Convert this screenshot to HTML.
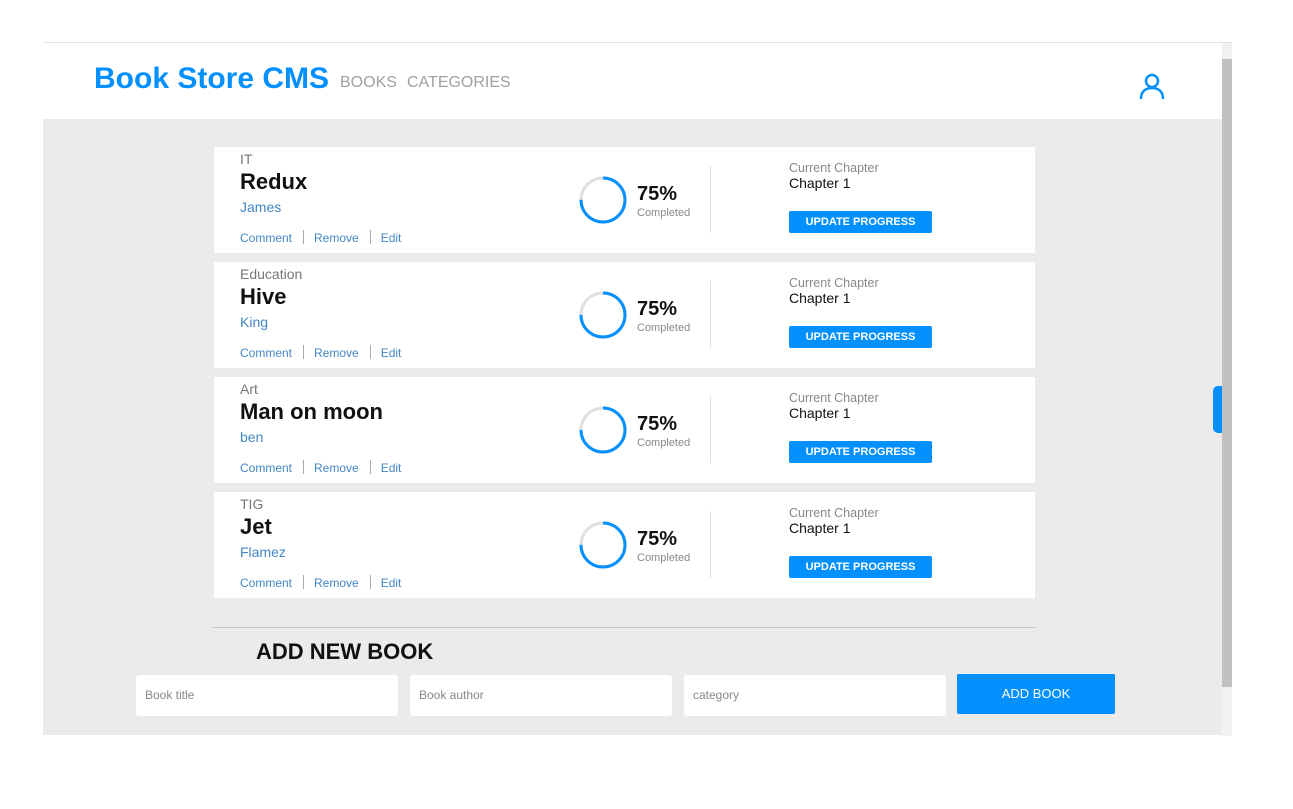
<!DOCTYPE html>
<html><head><style>
*{box-sizing:border-box;margin:0;padding:0}
body{width:1293px;height:809px;background:#fff;font-family:"Liberation Sans",Arial,sans-serif;position:relative;overflow:hidden}
.frame{position:absolute;left:43px;top:42px;width:1189px;height:693px;background:#edebe9;border-top:1px solid #e2e2e2}
.hdr{position:absolute;left:0;top:0;width:1179px;height:76px;background:#fff}
.logo{position:absolute;left:51px;top:19px;font-size:30px;font-weight:bold;color:#0290ff}
.nav{position:absolute;top:31px;font-size:16px;color:#a0a0a0}
.sb{position:absolute;left:1179px;top:0;width:10px;height:693px;background:#f1f1f1}
.thumb{position:absolute;left:1179px;top:16px;width:10px;height:628px;background:#c1c1c1}
.tab{position:absolute;left:1170px;top:343px;width:9px;height:47px;background:#0290ff;border-radius:5px 0 0 5px}
.card{position:absolute;left:171px;width:821px;height:106px;background:#fff}
.cat{position:absolute;left:26px;top:4px;font-size:14px;color:#777}
.title{position:absolute;left:26px;top:22px;font-size:22px;font-weight:bold;color:#111}
.auth{position:absolute;left:26px;top:52px;font-size:14px;color:#4386c6}
.acts{position:absolute;left:26px;top:83px;font-size:12px;color:#4386c6}
.acts span.s{display:inline-block;width:1px;height:14px;background:#aaa;margin:0 10px 0 11px;vertical-align:-2px}
.ring{position:absolute;left:364px;top:28px}
.pct{position:absolute;left:423px;top:36px;font-size:20px;font-weight:bold;color:#111}
.comp{position:absolute;left:423px;top:60px;font-size:11px;color:#888}
.div{position:absolute;left:496px;top:19px;width:1px;height:67px;background:#ddd}
.cc{position:absolute;left:575px;top:14px;font-size:12.5px;color:#888}
.ch{position:absolute;left:575px;top:28px;font-size:14px;color:#111}
.btn{position:absolute;left:575px;top:64px;width:143px;height:22px;background:#0290ff;color:#fff;font-size:11px;font-weight:bold;text-align:center;line-height:22px;border-radius:2px}
.line{position:absolute;left:170px;top:584px;width:822px;height:1px;background:#c8c8c8}
.add{position:absolute;left:213px;top:596px;font-size:22px;font-weight:bold;color:#111}
.inp{position:absolute;top:632px;width:262px;height:41px;background:#fff;border-radius:3px;font-size:12px;color:#888;padding:13px 9px}
.ab{position:absolute;left:914px;top:631px;width:158px;height:40px;background:#0290ff;color:#fff;font-size:13px;text-align:center;line-height:40px;border-radius:2px}
</style></head><body>
<div class="frame">
<div class="hdr">
<div class="logo">Book Store CMS</div>
<div class="nav" style="left:297px">BOOKS</div>
<div class="nav" style="left:364px">CATEGORIES</div>
<svg style="position:absolute;left:1095px;top:29px" width="28" height="28" viewBox="0 0 28 28" fill="none" stroke="#0290ff" stroke-width="2.5"><circle cx="14" cy="9" r="6"/><path d="M3 27 C3 19 8 16 14 16 C20 16 25 19 25 27"/></svg>
</div>
<div class="sb"></div><div class="thumb"></div><div class="tab"></div>

<div class="card" style="top:104px"><div class="cat">IT</div><div class="title">Redux</div><div class="auth">James</div><div class="acts">Comment<span class="s"></span>Remove<span class="s"></span>Edit</div>
<svg class="ring" width="50" height="50"><circle cx="25" cy="25" r="22" fill="none" stroke="#e0e0e0" stroke-width="3"/><circle cx="25" cy="25" r="22" fill="none" stroke="#0290ff" stroke-width="3" stroke-dasharray="103.7 138.2" transform="rotate(-90 25 25)"/></svg>
<div class="pct">75%</div><div class="comp">Completed</div><div class="div"></div><div class="cc">Current Chapter</div><div class="ch">Chapter 1</div><div class="btn">UPDATE PROGRESS</div></div>

<div class="card" style="top:219px"><div class="cat">Education</div><div class="title">Hive</div><div class="auth">King</div><div class="acts">Comment<span class="s"></span>Remove<span class="s"></span>Edit</div>
<svg class="ring" width="50" height="50"><circle cx="25" cy="25" r="22" fill="none" stroke="#e0e0e0" stroke-width="3"/><circle cx="25" cy="25" r="22" fill="none" stroke="#0290ff" stroke-width="3" stroke-dasharray="103.7 138.2" transform="rotate(-90 25 25)"/></svg>
<div class="pct">75%</div><div class="comp">Completed</div><div class="div"></div><div class="cc">Current Chapter</div><div class="ch">Chapter 1</div><div class="btn">UPDATE PROGRESS</div></div>

<div class="card" style="top:334px"><div class="cat">Art</div><div class="title">Man on moon</div><div class="auth">ben</div><div class="acts">Comment<span class="s"></span>Remove<span class="s"></span>Edit</div>
<svg class="ring" width="50" height="50"><circle cx="25" cy="25" r="22" fill="none" stroke="#e0e0e0" stroke-width="3"/><circle cx="25" cy="25" r="22" fill="none" stroke="#0290ff" stroke-width="3" stroke-dasharray="103.7 138.2" transform="rotate(-90 25 25)"/></svg>
<div class="pct">75%</div><div class="comp">Completed</div><div class="div"></div><div class="cc">Current Chapter</div><div class="ch">Chapter 1</div><div class="btn">UPDATE PROGRESS</div></div>

<div class="card" style="top:449px"><div class="cat">TIG</div><div class="title">Jet</div><div class="auth">Flamez</div><div class="acts">Comment<span class="s"></span>Remove<span class="s"></span>Edit</div>
<svg class="ring" width="50" height="50"><circle cx="25" cy="25" r="22" fill="none" stroke="#e0e0e0" stroke-width="3"/><circle cx="25" cy="25" r="22" fill="none" stroke="#0290ff" stroke-width="3" stroke-dasharray="103.7 138.2" transform="rotate(-90 25 25)"/></svg>
<div class="pct">75%</div><div class="comp">Completed</div><div class="div"></div><div class="cc">Current Chapter</div><div class="ch">Chapter 1</div><div class="btn">UPDATE PROGRESS</div></div>

<div class="line"></div>
<div class="add">ADD NEW BOOK</div>
<div class="inp" style="left:93px">Book title</div>
<div class="inp" style="left:367px">Book author</div>
<div class="inp" style="left:641px">category</div>
<div class="ab">ADD BOOK</div>
</div>
</body></html>
